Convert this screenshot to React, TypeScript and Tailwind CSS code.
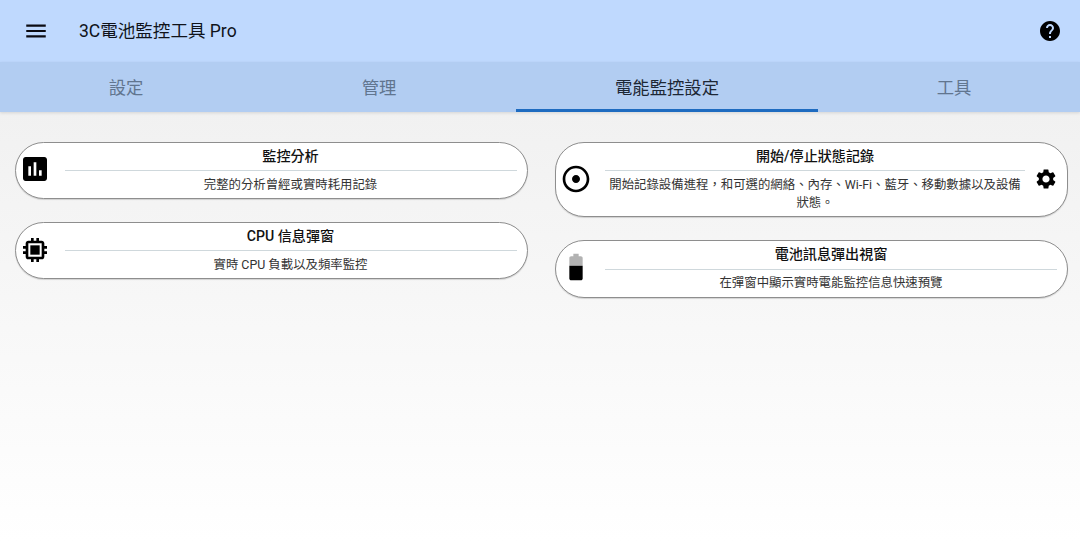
import type { ReactNode } from "react";
import { MdAdjust, MdAssessment, MdBattery60, MdHelp, MdMenu, MdSettings } from "react-icons/md";

const FONT = "font-['Roboto','Noto_Sans_CJK_TC',sans-serif]";

const TABS = [
  { label: "設定", width: "w-[252px]" },
  { label: "管理", width: "w-[254px]" },
  { label: "電能監控設定", width: "w-[322px]", active: true },
  { label: "工具", width: "w-[252px]" },
];

function ChipIcon() {
  return (
    <svg viewBox="0 0 24 24" className="-mt-[1px] h-[32px] w-[32px]" fill="currentColor">
      <path d="M8.5 8.5h7v7h-7z" />
      <path d="M21 11V9h-2V7c0-1.1-.9-2-2-2h-2V3h-2v2h-2V3H9v2H7c-1.1 0-2 .9-2 2v2H3v2h2v2H3v2h2v2c0 1.1.9 2 2 2h2v2h2v-2h2v2h2v-2h2c1.1 0 2-.9 2-2v-2h2v-2h-2v-2h2zm-4 6H7V7h10v10z" />
    </svg>
  );
}

function FeatureCard({
  icon,
  title,
  description,
  action,
}: {
  icon: ReactNode;
  title: string;
  description: string;
  action?: ReactNode;
}) {
  return (
    <div className="flex items-center rounded-[29px] border border-[#8e8e8e] bg-white shadow-[0_1px_1px_rgba(0,0,0,0.15)]">
      <div className="flex w-[39px] shrink-0 justify-center text-black">{icon}</div>
      <div className="ml-[10px] mr-[10px] min-w-0 flex-1">
        <div className="flex h-[27.5px] items-center justify-center text-[14.1px] font-medium text-[#111]">{title}</div>
        <div className="h-px bg-[#cfd8dc]" />
        <div className="py-[4.5px] text-center text-[12.4px] leading-[18px] text-[#333]">{description}</div>
      </div>
      {action}
    </div>
  );
}

export default function App() {
  return (
    <div className={`flex h-[542px] w-[1080px] flex-col overflow-hidden bg-white ${FONT}`}>
      <header className="flex h-[62px] shrink-0 items-center justify-between bg-[#bfd9fe] pl-[23px] pr-[18px]">
        <div className="flex items-center">
          <MdMenu className="text-[26px] text-[#0b0b12]" />
          <span className="ml-[30px] text-[17.55px] text-[#10131a]">3C電池監控工具 Pro</span>
        </div>
        <MdHelp className="text-[24px] text-black" />
      </header>

      <nav className="z-10 flex h-[50px] shrink-0 bg-[#b2cdf2] shadow-[0_1px_3px_rgba(0,0,0,0.12)]">
        {TABS.map((tab) => (
          <div
            key={tab.label}
            className={`relative flex items-center justify-center pt-[4px] text-[17.33px] ${tab.width} ${tab.active ? "text-[#1d2735]" : "text-[#61758f]"}`}
          >
            {tab.label}
            {tab.active && <div className="absolute inset-x-[10px] bottom-0 h-[3px] bg-[#1e6bc0]" />}
          </div>
        ))}
      </nav>

      <main className="flex flex-1 gap-[27.5px] bg-gradient-to-b from-[#f1f1f1] to-white pl-[14.5px] pr-[12px] pt-[29.5px]">
        <div className="flex flex-1 flex-col gap-[22.5px]">
          <FeatureCard
            icon={<MdAssessment className="-mt-[3px] text-[32px]" />}
            title="監控分析"
            description="完整的分析曾經或實時耗用記錄"
          />
          <FeatureCard icon={<ChipIcon />} title="CPU 信息彈窗" description="實時 CPU 負載以及頻率監控" />
        </div>
        <div className="flex flex-1 flex-col gap-[23px]">
          <FeatureCard
            icon={<MdAdjust className="text-[32px]" />}
            title="開始/停止狀態記錄"
            description="開始記錄設備進程，和可選的網絡、內存、Wi-Fi、藍牙、移動數據以及設備狀態。"
            action={<MdSettings className="-ml-[1px] mr-[9px] text-[24px] text-black" />}
          />
          <FeatureCard
            icon={<MdBattery60 className="-mt-[3px] text-[32px]" />}
            title="電池訊息彈出視窗"
            description="在彈窗中顯示實時電能監控信息快速預覽"
          />
        </div>
      </main>
    </div>
  );
}
